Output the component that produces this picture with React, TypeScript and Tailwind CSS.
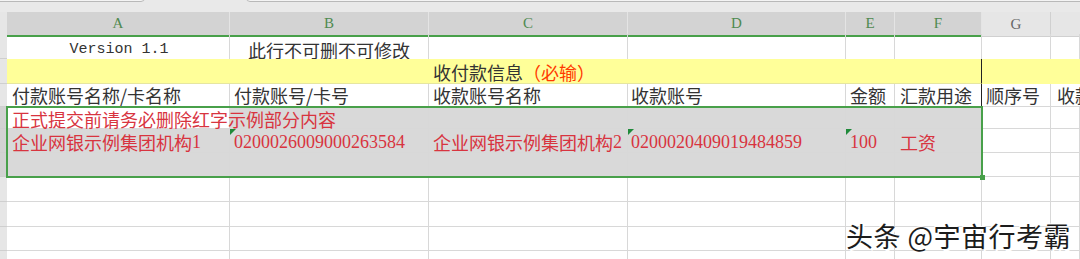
import React from 'react';

const COLS = 'grid grid-cols-[7px_223px_199px_199px_218px_49px_87px_69px_1fr]';
const CJK = "font-['Noto_Sans_CJK_SC',sans-serif]";

type CellProps = {
  children?: React.ReactNode;
  className?: string;
  span?: string;
};

function Cell({ children, className = '', span = '' }: CellProps) {
  return (
    <div
      className={`relative flex items-center whitespace-nowrap border-r border-b border-[#d8d8d8] ${span} ${className}`}
    >
      {children}
    </div>
  );
}

function Tri() {
  return (
    <span className="absolute left-0 top-0 h-0 w-0 border-t-[6px] border-r-[6px] border-t-[#1f8a3a] border-r-transparent" />
  );
}

function RowHead({ h, sel = false }: { h: string; sel?: boolean }) {
  return <div className={`${h} border-b border-[#cfcfcf] ${sel ? 'bg-[#d2d2d2]' : 'bg-[#e6e6e6]'}`} />;
}

export default function App() {
  const letters = ['A', 'B', 'C', 'D', 'E', 'F'];
  const red = 'text-[#d8343f]';
  const head = 'text-[#333] text-[18px] leading-none';
  const sel = 'bg-[#d9d9d9] border-[#bdbdbd]';
  const digits = "font-['Liberation_Serif',serif] text-[18px] leading-none";

  return (
    <div className={`relative h-[259px] w-[1080px] overflow-hidden bg-white ${CJK}`}>
      {/* toolbar remnants */}
      <div className="relative h-[12px] bg-[#e9e9e9]">
        <div className="absolute left-[-10px] top-[-10px] h-[12px] w-[155px] rounded-b-[4px] border border-[#b9b9b9] bg-[#f4f4f4]" />
        <div className="absolute left-[246px] top-[-10px] h-[12px] w-[850px] rounded-b-[4px] border border-[#b9b9b9] bg-[#f4f4f4]" />
      </div>

      {/* column headers */}
      <div className={`${COLS} h-[22px] font-['Liberation_Serif',serif] text-[15px]`}>
        <div className="bg-[#e6e6e6] border-b border-[#cfcfcf]" />
        {letters.map((l) => (
          <div
            key={l}
            className="flex items-center justify-center border-r border-[#e4e4e4] border-b-2 border-b-[#48a04a] bg-[#d3d3d3] text-[#4f8a50]"
          >
            {l}
          </div>
        ))}
        <div className="flex items-center justify-center border-r border-b border-[#d0d0d0] bg-[#e6e6e6] text-[#666]">G</div>
        <div className="border-b border-[#d0d0d0] bg-[#e6e6e6]" />
      </div>

      {/* row 1 */}
      <div className={`${COLS} h-[25px]`}>
        <RowHead h="h-[25px]" />
        <Cell className="justify-center pl-[2px] pt-[5px] font-['Liberation_Mono',monospace] text-[15px] text-[#333]">Version 1.1</Cell>
        <Cell className={`justify-center pt-[4px] ${head}`}>此行不可删不可修改</Cell>
        <Cell />
        <Cell />
        <Cell />
        <Cell />
        <Cell />
        <Cell />
      </div>

      {/* row 2 */}
      <div className={`${COLS} h-[25px]`}>
        <RowHead h="h-[25px]" />
        <Cell span="col-span-6" className="border-r-[#222] border-b-[#e6e6a0] bg-[#ffff99] pl-[426px] pt-[2px] text-[18px] leading-none">
          <span className="text-[#333]">收付款信息</span>
          <span className="text-[#ff3a00]">（必输）</span>
        </Cell>
        <Cell className="border-[#ffff99] bg-[#ffff99]" />
        <Cell className="border-[#ffff99] bg-[#ffff99]" />
      </div>

      {/* row 3 */}
      <div className={`${COLS} h-[23px]`}>
        <RowHead h="h-[23px]" />
        <Cell className={`pl-[5px] ${head}`}>付款账号名称/卡名称</Cell>
        <Cell className={`pl-[4px] ${head}`}>付款账号/卡号</Cell>
        <Cell className={`pl-[4px] ${head}`}>收款账号名称</Cell>
        <Cell className={`pl-[3px] ${head}`}>收款账号</Cell>
        <Cell className={`pl-[4px] ${head}`}>金额</Cell>
        <Cell className={`border-r-[#222] pl-[5px] ${head}`}>汇款用途</Cell>
        <Cell className={`pl-[4px] ${head}`}>顺序号</Cell>
        <Cell className={`pl-[6px] ${head}`}>收款</Cell>
      </div>

      {/* row 4 */}
      <div className={`${COLS} h-[22px]`}>
        <RowHead h="h-[22px]" sel />
        <Cell className="border-[#bdbdbd] bg-white pl-[5px] pt-[2px] text-[18px] leading-none">
          <span className={`relative z-10 ${red}`}>正式提交前请务必删除红字示例部分内容</span>
        </Cell>
        <Cell className={sel} />
        <Cell className={sel} />
        <Cell className={sel} />
        <Cell className={sel} />
        <Cell className={sel} />
        <Cell />
        <Cell />
      </div>

      {/* row 5 */}
      <div className={`${COLS} h-[24px]`}>
        <RowHead h="h-[24px]" sel />
        <Cell className={`${sel} pl-[5px] pt-[3px] text-[18px] leading-none ${red}`}>
          企业网银示例集团机构<span className={digits}>1</span>
        </Cell>
        <Cell className={`${sel} pl-[4px] pt-[3px] ${digits} ${red}`}>
          <Tri />
          0200026009000263584
        </Cell>
        <Cell className={`${sel} pl-[4px] pt-[3px] text-[18px] leading-none ${red}`}>
          企业网银示例集团机构<span className={digits}>2</span>
        </Cell>
        <Cell className={`${sel} pl-[3px] pt-[3px] ${digits} ${red}`}>
          <Tri />
          0200020409019484859
        </Cell>
        <Cell className={`${sel} pl-[4px] pt-[3px] ${digits} ${red}`}>
          <Tri />
          100
        </Cell>
        <Cell className={`${sel} pl-[5px] pt-[3px] text-[18px] leading-none ${red}`}>工资</Cell>
        <Cell />
        <Cell />
      </div>

      {/* row 6 */}
      <div className={`${COLS} h-[24px]`}>
        <RowHead h="h-[24px]" sel />
        <Cell className={sel} />
        <Cell className={sel} />
        <Cell className={sel} />
        <Cell className={sel} />
        <Cell className={sel} />
        <Cell className={sel} />
        <Cell />
        <Cell />
      </div>

      {/* empty rows */}
      {['h-[25px]', 'h-[25px]', 'h-[24px]', 'h-[24px]'].map((h, i) => (
        <div key={i} className={`${COLS} ${h}`}>
          <RowHead h={h} />
          <Cell />
          <Cell />
          <Cell />
          <Cell />
          <Cell />
          <Cell />
          <Cell />
          <Cell />
        </div>
      ))}

      {/* selection outline */}
      <div className="pointer-events-none absolute left-[6px] top-[106px] h-[72px] w-[977px] border-2 border-[#48a04a]" />
      <div className="pointer-events-none absolute left-[980px] top-[175px] h-[5px] w-[5px] bg-[#48a04a]" />

      {/* watermark */}
      <div className="pointer-events-none absolute left-[846px] top-[222px] text-[27px] leading-none tracking-[0.5px] text-[#1c1c1c] [text-shadow:2px_2px_0_#fff,-1px_-1px_0_#fff]">
        头条 @宇宙行考霸
      </div>
    </div>
  );
}
